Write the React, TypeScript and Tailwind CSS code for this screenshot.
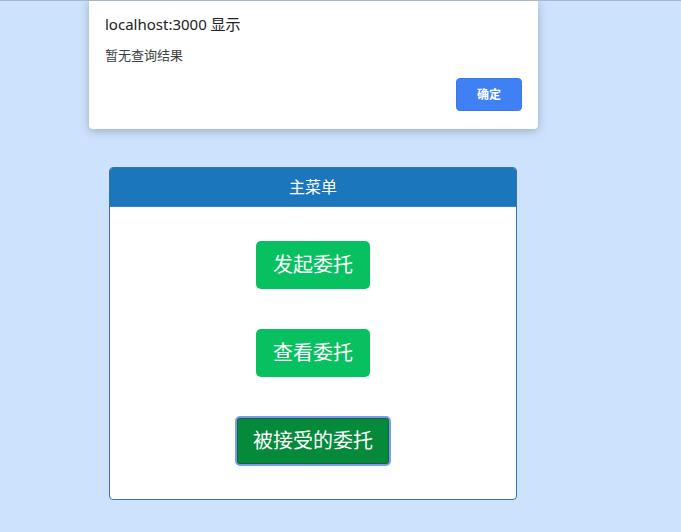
import React from "react";

export default function App() {
  return (
    <div
      className="relative h-[532px] w-[681px] overflow-hidden border-t border-[#a9b8c8] bg-[#cde3fd]"
      style={{ fontFamily: '"Noto Sans", "Noto Sans CJK SC", sans-serif' }}
    >
      {/* alert dialog overlay */}
      <div className="absolute left-[89px] top-[-1px] flex h-[129px] w-[449px] flex-col rounded-b-[4px] bg-white px-4 pt-[14px] shadow-[0_2px_10px_rgba(60,70,90,0.35)]">
        <div className="text-[15px] leading-[20px] text-[#202124]">localhost:3000 显示</div>
        <div className="mt-[12px] text-[13px] leading-[18px] text-[#3c4043]">暂无查询结果</div>
        <div className="mt-[14px] flex justify-end">
          <button className="h-[33px] w-[66px] rounded-[4px] border border-[#3a78e8] bg-[#3f80f5] text-[12px] font-bold text-white">
            确定
          </button>
        </div>
      </div>

      {/* main card */}
      <div className="ml-[109px] mt-[166px] w-[408px] overflow-hidden rounded-[4px] border border-[#3673a8] bg-white">
        <div className="flex h-[39px] items-center justify-center border-b border-[#3a82c4] bg-[#1c76bc] text-[16px] text-white">
          主菜单
        </div>
        <div className="flex flex-col items-center pb-[33px] pt-[34px]">
          <button className="h-[48px] w-[114px] rounded-[5px] bg-[#07c160] text-[20px] text-white">
            发起委托
          </button>
          <button className="mt-[40px] h-[48px] w-[114px] rounded-[5px] bg-[#07c160] text-[20px] text-white">
            查看委托
          </button>
          <button className="mt-[39px] h-[50px] w-[156px] rounded-[5px] border-[2px] border-[#7b9cf0] bg-[#058a3c] text-[20px] text-white shadow-[inset_0_0_0_1px_#1a5f3a]">
            被接受的委托
          </button>
        </div>
      </div>
    </div>
  );
}
